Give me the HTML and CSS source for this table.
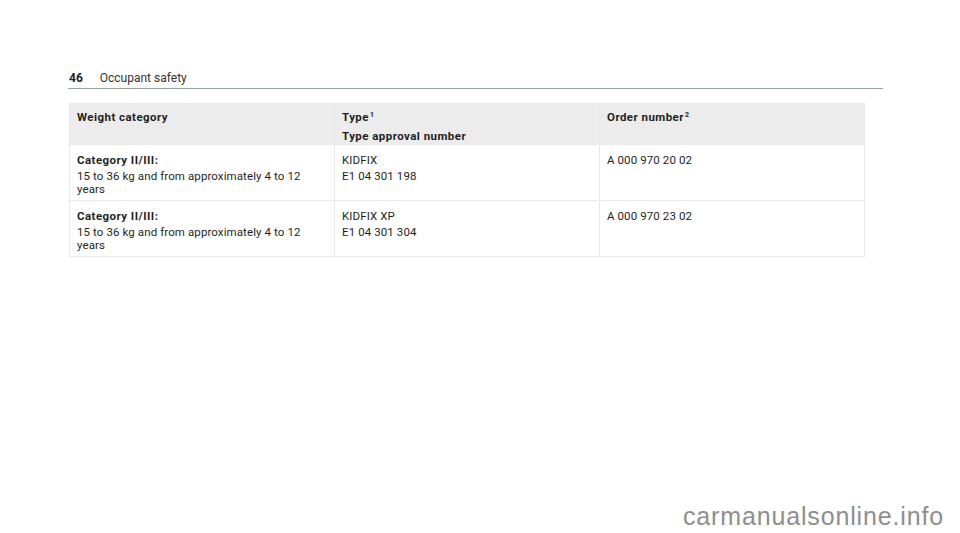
FILE: index.html
```html
<!DOCTYPE html>
<html>
<head>
<meta charset="utf-8">
<link rel="stylesheet" href="styles.css">
</head>
<body>
<div class="page">
  <header class="page-head">
    <span class="page-num">46</span>
    <span class="page-title">Occupant safety</span>
  </header>
  <table class="seats">
    <thead>
      <tr>
        <th><p>Weight category</p></th>
        <th><p>Type<sup>1</sup></p><p>Type approval number</p></th>
        <th><p>Order number<sup>2</sup></p></th>
      </tr>
    </thead>
    <tbody>
      <tr>
        <td><p class="strong">Category II/III:</p><p>15 to 36 kg and from approximately 4 to 12<br>years</p></td>
        <td><p>KIDFIX</p><p>E1 04 301 198</p></td>
        <td><p>A 000 970 20 02</p></td>
      </tr>
      <tr>
        <td><p class="strong">Category II/III:</p><p>15 to 36 kg and from approximately 4 to 12<br>years</p></td>
        <td><p>KIDFIX XP</p><p>E1 04 301 304</p></td>
        <td><p>A 000 970 23 02</p></td>
      </tr>
    </tbody>
  </table>
  <div class="watermark">carmanualsonline.info</div>
</div>
</body>
</html>
```

FILE: styles.css
```css
html, body {
  margin: 0;
  padding: 0;
  background: #ffffff;
}
body {
  font-family: Roboto, "Liberation Sans", sans-serif;
  color: #1f1f1f;
  width: 960px;
  height: 533px;
  overflow: hidden;
}
.page {
  position: relative;
  width: 960px;
  height: 533px;
  padding: 71px 77px 0 68px;
  box-sizing: border-box;
}
.page-head {
  display: flex;
  align-items: baseline;
  gap: 17px;
  padding: 0 0 3px 1px;
  border-bottom: 1px solid #93a29a;
  font-size: 12px;
  line-height: 14px;
}
.page-num {
  font-weight: 700;
}
.page-title {
  font-weight: 400;
  color: #333;
}
.seats {
  margin: 14px 18px 0 1px;
  width: 796px;
  border-collapse: collapse;
  table-layout: fixed;
  font-size: 11.5px;
  line-height: 13px;
  letter-spacing: 0.1px;
}
.seats th, .seats td {
  width: 33.33%;
  text-align: left;
  vertical-align: top;
  border: 1px solid #e8e9e8;
}
.seats th {
  background: #ebeceb;
  font-weight: 700;
  letter-spacing: 0.45px;
  padding: 7px 7px 1px;
  height: 32px;
}
.seats td {
  padding: 9px 7px 4px;
}
.seats p {
  margin: 0 0 3px;
}
.seats th p {
  margin: 0 0 6px;
}
.seats th p:last-child {
  margin-bottom: 0;
}
.seats td p:last-child {
  margin-bottom: 0;
}
.seats .strong {
  font-weight: 700;
  letter-spacing: 0.45px;
}
.seats sup {
  font-size: 7px;
  line-height: 0;
  vertical-align: 4px;
  margin-left: 1px;
  letter-spacing: 0;
}
.watermark {
  position: absolute;
  right: 16px;
  bottom: 3px;
  font-family: "Liberation Sans", Arial, sans-serif;
  font-size: 25px;
  line-height: 28px;
  letter-spacing: 0.85px;
  color: #8e8e8e;
}
```
